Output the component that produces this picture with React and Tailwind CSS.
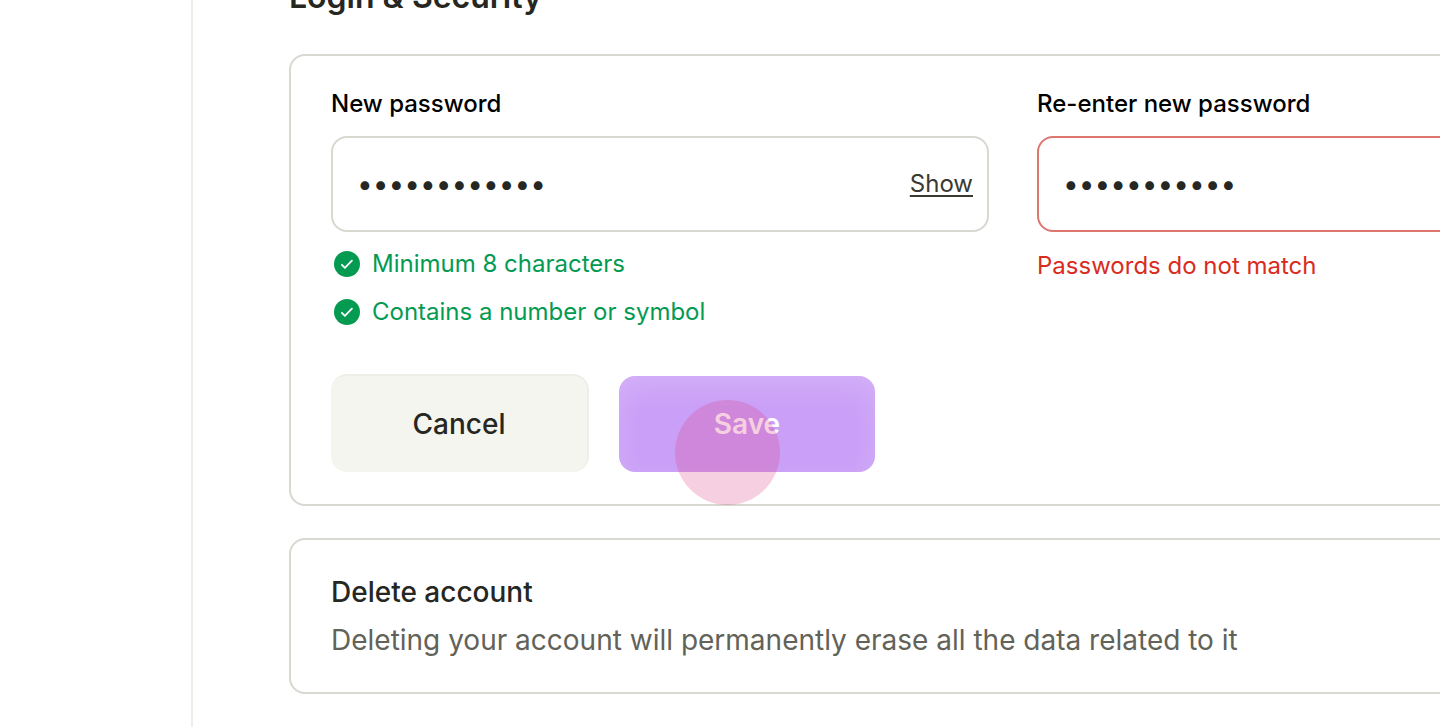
import { useState } from 'react';

function CheckIcon() {
  return (
    <svg width="26" height="26" viewBox="0 0 26 26" fill="none" aria-hidden="true">
      <circle cx="13" cy="13" r="13" fill="#049a52" />
      <path d="M7.9 13.8l3 3.1 7-7.3" stroke="white" strokeWidth="1.8" strokeLinecap="round" strokeLinejoin="round" />
    </svg>
  );
}

function Requirement({ children }) {
  return (
    <li className="flex items-center gap-3 h-12 pl-[3px] text-2xl text-[#049a52]">
      <CheckIcon />
      <span>{children}</span>
    </li>
  );
}

export default function App() {
  const [visible, setVisible] = useState(false);
  const [password, setPassword] = useState('sunflower#42');
  const [confirm, setConfirm] = useState('sunflower#4');

  return (
    <div className="flex h-screen overflow-hidden bg-white font-['Inter',sans-serif] text-[#262722]">
      <aside className="w-[193px] shrink-0 border-r-2 border-[#eeeee8]"></aside>
      <main className="flex-1 min-w-0 pl-24 overflow-hidden">
        <h1 className="-mt-[23px] mb-[37px] text-[32px] leading-10 font-semibold">Login &amp; Security</h1>

        {/* the settings column runs past the right edge of the window */}
        <div className="-mr-[297px] flex flex-col gap-8">
          <form className="rounded-2xl border-2 border-[#d7d8d0] px-10 py-8" onSubmit={(e) => e.preventDefault()}>
            <div className="grid grid-cols-2 gap-12">
              <div>
                <label htmlFor="new-password" className="block mb-4 text-2xl font-medium text-black">
                  New password
                </label>
                <div className="flex items-center h-24 rounded-2xl border-2 border-[#d7d8d0] pl-6 pr-[14px]">
                  <input
                    id="new-password"
                    type={visible ? 'text' : 'password'}
                    value={password}
                    onChange={(e) => setPassword(e.target.value)}
                    className="flex-1 min-w-0 h-full text-[28px] outline-none"
                  />
                  <button
                    type="button"
                    onClick={() => setVisible(!visible)}
                    className="text-2xl text-[#3a3a32] underline decoration-2 underline-offset-[3px]"
                  >
                    Show
                  </button>
                </div>
                <ul className="mt-2">
                  <Requirement>Minimum 8 characters</Requirement>
                  <Requirement>Contains a number or symbol</Requirement>
                </ul>
              </div>

              <div>
                <label htmlFor="confirm-password" className="block mb-4 text-2xl font-medium text-black">
                  Re-enter new password
                </label>
                <div className="flex items-center h-24 rounded-2xl border-2 border-[#dc766e] px-6">
                  <input
                    id="confirm-password"
                    type="password"
                    value={confirm}
                    onChange={(e) => setConfirm(e.target.value)}
                    className="flex-1 min-w-0 h-full text-[28px] outline-none"
                  />
                </div>
                <p className="mt-[18px] text-2xl text-[#d92b20]">Passwords do not match</p>
              </div>
            </div>

            <div className="mt-[38px] flex items-end gap-[30px]">
              <button
                type="button"
                className="w-[258px] h-[98px] rounded-2xl border-t-2 border-r-2 border-[#eeeee8] bg-[#f5f5ef] text-[28px] font-medium"
              >
                Cancel
              </button>
              <div className="relative">
                <button
                  type="submit"
                  className="block w-64 h-24 rounded-2xl bg-[#ca9ff7] text-[28px] font-semibold text-white shadow-[inset_0_12px_28px_rgba(255,255,255,0.18)]"
                >
                  Save
                </button>
                <span className="absolute left-14 top-6 size-[105px] rounded-full bg-[#db4084]/25 pointer-events-none"></span>
              </div>
            </div>
          </form>

          <section className="rounded-2xl border-2 border-[#d7d8d0] px-10 py-8">
            <h2 className="mb-2 text-[28px] leading-10 font-medium">Delete account</h2>
            <p className="text-[28px] leading-10 text-[#626259]">
              Deleting your account will permanently erase all the data related to it
            </p>
          </section>
        </div>
      </main>
    </div>
  );
}
